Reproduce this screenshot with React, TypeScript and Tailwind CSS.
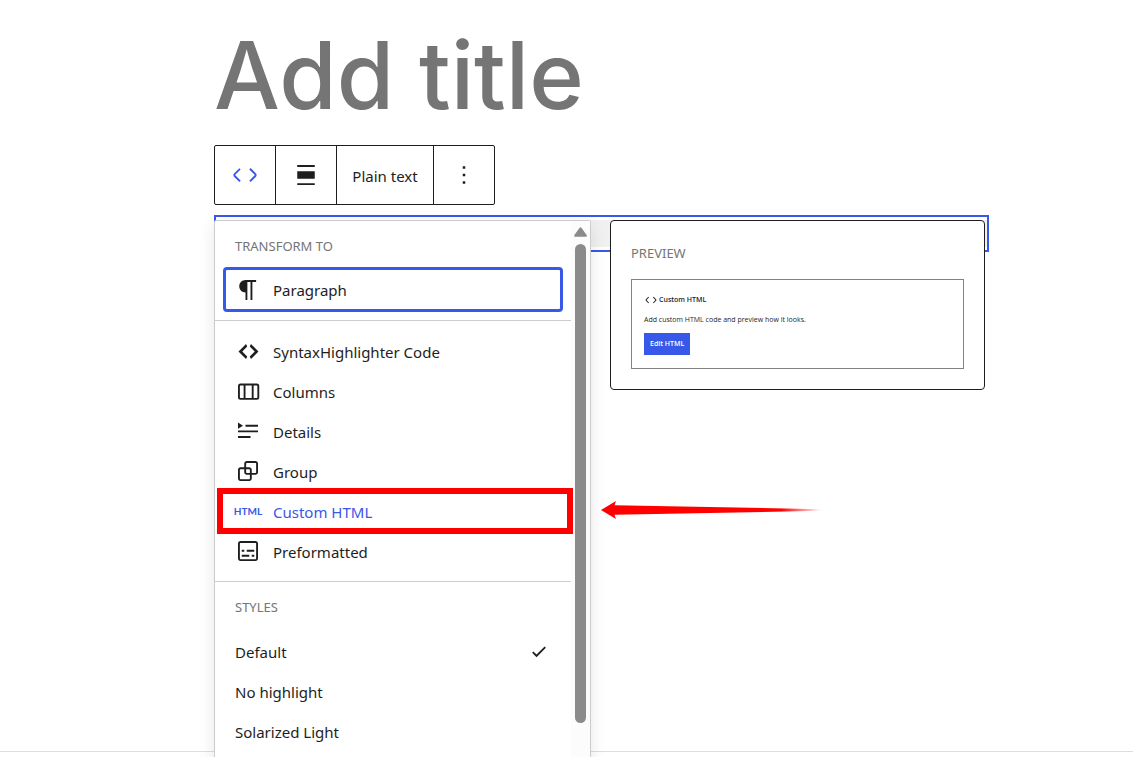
import { useState, type ReactNode } from "react";
import clsx from "clsx";

type IconProps = { d: string; className?: string; viewBox?: string };

function Icon({ d, className = "w-[30px] h-[30px]", viewBox = "0 0 24 24" }: IconProps) {
  return (
    <svg viewBox={viewBox} className={clsx("shrink-0 fill-current", className)} fillRule="evenodd" aria-hidden="true">
      <path d={d} />
    </svg>
  );
}

const icons = {
  code: "M20.8 10.7l-4.3-4.3-1.1 1.1 4.3 4.3c.1.1.1.3 0 .4l-4.3 4.3 1.1 1.1 4.3-4.3c.7-.8.7-1.9 0-2.6zM4.2 11.8l4.3-4.3-1-1-4.3 4.3c-.7.7-.7 1.8 0 2.5l4.3 4.3 1.1-1.1-4.3-4.3c-.2-.1-.2-.3-.1-.4z",
  alignNone: "M19 5.5H5V4h14v1.5ZM19 20H5v-1.5h14V20ZM5 9h14v6H5V9Z",
  more: "M13 19h-2v-2h2v2zm0-6h-2v-2h2v2zm0-6h-2V5h2v2z",
  paragraph:
    "m9.996 14v-.2251l.004.0001v6.225h1.5v-14.5h2.5v14.5h1.5v-14.5h3v-1.5h-8.504c-2.761 0-5 2.239-5 5 0 2.761 2.239 5 5 5z",
  syntax: "M9 6l-4 4 4 4-1 2-6-6 6-6zM11 6l4 4-4 4 1 2 6-6-6-6z",
  columns:
    "M15 7.5h-5v10h5v-10zm1.5 0v10H19a.5.5 0 00.5-.5V8a.5.5 0 00-.5-.5h-2.5zM6 7.5h2.5v10H6a.5.5 0 01-.5-.5V8a.5.5 0 01.5-.5zM6 6h13a2 2 0 012 2v9a2 2 0 01-2 2H6a2 2 0 01-2-2V8a2 2 0 012-2z",
  details: "M4 16h10v1.5H4V16Zm0-4.5h16V13H4v-1.5ZM10 7h10v1.5H10V7ZM4 5.25l4 2.5-4 2.5v-5Z",
  group:
    "M18 4h-7c-1.1 0-2 .9-2 2v3H6c-1.1 0-2 .9-2 2v7c0 1.1.9 2 2 2h7c1.1 0 2-.9 2-2v-3h3c1.1 0 2-.9 2-2V6c0-1.1-.9-2-2-2zm-4.5 14c0 .3-.2.5-.5.5H6c-.3 0-.5-.2-.5-.5v-7c0-.3.2-.5.5-.5h3V13c0 1.1.9 2 2 2h2.5v3zm0-4.5H11c-.3 0-.5-.2-.5-.5v-2.5H13c.3 0 .5.2.5.5v2.5zm5-.5c0 .3-.2.5-.5.5h-3V11c0-1.1-.9-2-2-2h-2.5V6c0-.3.2-.5.5-.5h7c.3 0 .5.2.5.5v7z",
  preformatted:
    "M18 4H6c-1.1 0-2 .9-2 2v12c0 1.1.9 2 2 2h12c1.1 0 2-.9 2-2V6c0-1.1-.9-2-2-2zm.5 14c0 .3-.2.5-.5.5H6c-.3 0-.5-.2-.5-.5V6c0-.3.2-.5.5-.5h12c.3 0 .5.2.5.5v12zM7 16.5h6V15H7v1.5zm4-4h6V11h-6v1.5zM9 11H7v1.5h2V11zm6 5.5h2V15h-2v1.5z",
  check: "M16.5 7.5 10 13.9l-2.5-2.4-1 1 3.5 3.6 7.5-7.6z",
};

const transforms: { label: string; icon: ReactNode }[] = [
  { label: "SyntaxHighlighter Code", icon: <Icon d={icons.syntax} viewBox="0 0 20 20" className="w-[25px] h-[25px]" /> },
  { label: "Columns", icon: <Icon d={icons.columns} /> },
  { label: "Details", icon: <Icon d={icons.details} /> },
  { label: "Group", icon: <Icon d={icons.group} /> },
  { label: "Custom HTML", icon: <span className="font-['Lato',sans-serif] text-[10px] font-bold">HTML</span> },
  { label: "Preformatted", icon: <Icon d={icons.preformatted} /> },
];

const styles = ["Default", "No highlight", "Solarized Light"];

function MenuHeading({ children }: { children: ReactNode }) {
  return <h2 className="text-[13px] leading-5 text-[#757575] uppercase">{children}</h2>;
}

function MenuItem({ label, icon, className }: { label: string; icon: ReactNode; className?: string }) {
  return (
    <button type="button" role="menuitem" className={clsx("flex w-full items-center gap-2.5 px-2.5 text-left", className)}>
      <span className="flex w-[30px] shrink-0 justify-center pb-0.5">{icon}</span>
      {label}
    </button>
  );
}

function Toolbar() {
  return (
    <div role="toolbar" aria-label="Block tools" className="flex h-[60px] w-fit divide-x divide-[#1e1e1e] rounded-xs border border-[#1e1e1e] text-[15px]">
      <button type="button" aria-label="Code" className="flex w-[61px] items-center justify-center text-[#3858e9]">
        <Icon d={icons.code} />
      </button>
      <button type="button" aria-label="Align" className="flex w-[61px] items-center justify-center">
        <Icon d={icons.alignNone} />
      </button>
      <button type="button" className="w-[97px] pt-0.5">Plain text</button>
      <button type="button" aria-label="Options" className="flex w-[60px] items-center justify-center">
        <Icon d={icons.more} />
      </button>
    </div>
  );
}

function TransformMenu() {
  const [activeStyle, setActiveStyle] = useState("Default");

  return (
    <div className="absolute top-[5px] left-0 flex w-[377px] rounded-xs border border-[#ccc] bg-white text-[15px] shadow-[0_4px_16px_rgba(0,0,0,0.1)]">
      <div role="menu" className="flex-1">
        <section className="border-b border-[#ccc] px-2 pt-[15px] pb-2">
          <div className="px-3">
            <MenuHeading>Transform to</MenuHeading>
          </div>
          <MenuItem
            label="Paragraph"
            icon={<Icon d={icons.paragraph} />}
            className="mt-[11px] h-[45px] rounded-sm pt-0.5 outline-3 -outline-offset-3 outline-[#3858e9]"
          />
        </section>

        <section className="border-b border-[#ccc] px-2 pt-[11px] pb-[9px]">
          {transforms.map(({ label, icon }) => (
            <div key={label} className="relative">
              <MenuItem label={label} icon={icon} className={clsx("h-10", label === "Custom HTML" && "text-[#3858e9]")} />
              {label === "Custom HTML" && (
                <div className="pointer-events-none absolute -inset-x-1.5 -top-1 -bottom-0.5 -mr-1 border-6 border-[#f00]" />
              )}
            </div>
          ))}
        </section>

        <section className="px-5 pt-[15px] pb-8">
          <MenuHeading>Styles</MenuHeading>
          <div className="mt-[15px]">
            {styles.map((name) => (
              <button
                key={name}
                type="button"
                role="menuitemradio"
                aria-checked={activeStyle === name}
                onClick={() => setActiveStyle(name)}
                className="flex h-10 w-full items-center justify-between text-left"
              >
                {name}
                {activeStyle === name && <Icon d={icons.check} className="-mr-[3px] h-[30px] w-[30px]" />}
              </button>
            ))}
          </div>
        </section>
      </div>

      {/* Scrollbar */}
      <div className="flex w-[19px] flex-col items-center bg-[#fcfcfc] pt-1.5">
        <svg viewBox="0 0 13 10" className="h-2.5 w-[13px] fill-[#8b8b8b]" aria-hidden="true">
          <path d="M5.6.7Q6.5-.4 7.4.7L12.6 8Q13.2 9.6 12 9.8H1Q-.2 9.6.4 8Z" />
        </svg>
        <div className="mt-[7px] h-[479px] w-[11px] rounded-full bg-[#8b8b8b]" />
      </div>
    </div>
  );
}

function PreviewCard() {
  return (
    <div className="absolute top-[5px] right-1 w-[375px] rounded-sm border border-[#1e1e1e] bg-white px-5 pt-[22px] pb-5">
      <MenuHeading>Preview</MenuHeading>
      <div className="mt-4 border border-[#828282] px-3 py-[13px] font-['Open_Sans',sans-serif] text-[7px] leading-3">
        <div className="flex items-center gap-px font-semibold">
          <Icon d={icons.code} className="h-3.5 w-3.5" />
          Custom HTML
        </div>
        <p className="mt-[7px]">Add custom HTML code and preview how it looks.</p>
        <button type="button" className="mt-[7px] h-[22px] bg-[#3858e9] px-1.5 font-semibold text-white">
          Edit HTML
        </button>
      </div>
    </div>
  );
}

export default function App() {
  return (
    <div className="relative h-screen overflow-hidden bg-white font-['Noto_Sans','Open_Sans',sans-serif] text-[#1e1e1e]">
      <main className="flex h-full flex-col pt-5 pr-36 pl-[214px]">
        <h1 className="font-['Inter',sans-serif] text-[93px] leading-[110px] font-medium text-[#757575]">Add title</h1>
        <div className="mt-[15px]">
          <Toolbar />
        </div>

        <div className="relative z-10 mt-2.5">
          <div className="h-[37px] border-2 border-[#3858e9] py-[3px]">
            <textarea aria-label="Code" className="block h-full w-full resize-none bg-[#f0f0f0]" />
          </div>
          <TransformMenu />
          <PreviewCard />

          {/* Arrow pointing at the Custom HTML item */}
          <svg viewBox="0 0 222 20" className="absolute top-[285px] left-[386px] h-5 w-[222px]" aria-hidden="true">
            <defs>
              <linearGradient id="tail" x1="0" x2="1">
                <stop offset="0.82" stopColor="#f00" />
                <stop offset="1" stopColor="#f00" stopOpacity="0" />
              </linearGradient>
            </defs>
            <path d="M1 10 16 1 14.5 5.2 221 9.2V10.8L14.5 14.8 16 19Z" fill="url(#tail)" />
          </svg>
        </div>
      </main>
      <div className="absolute inset-x-0 bottom-0 h-1.5 border-t border-[#ddd]" />
    </div>
  );
}
